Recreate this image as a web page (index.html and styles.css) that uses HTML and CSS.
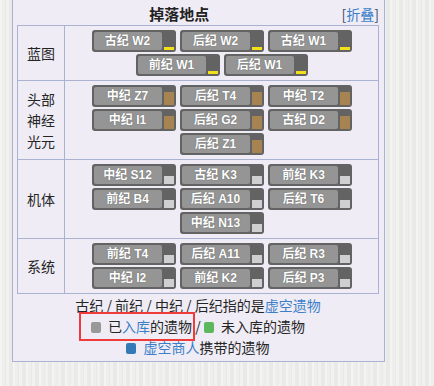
FILE: index.html
```html
<!DOCTYPE html>
<html lang="zh">
<head>
<meta charset="utf-8">
<title>掉落地点</title>
<link rel="stylesheet" href="styles.css">
</head>
<body>
<div class="navbox">
  <div class="navbox-title">
    <span class="toggle">[<a class="link">折叠</a>]</span>
    <span class="title-text">掉落地点</span>
  </div>
  <div class="navbox-grid">
    <div class="group">蓝图</div>
    <div class="items">
      <a class="relic"><span class="relic-name">古纪 W2</span><span class="meter"><span class="fill bp"></span></span></a>
      <a class="relic"><span class="relic-name">后纪 W2</span><span class="meter"><span class="fill bp"></span></span></a>
      <a class="relic"><span class="relic-name">古纪 W1</span><span class="meter"><span class="fill bp"></span></span></a>
      <a class="relic"><span class="relic-name">前纪 W1</span><span class="meter"><span class="fill bp"></span></span></a>
      <a class="relic"><span class="relic-name">后纪 W1</span><span class="meter"><span class="fill bp"></span></span></a>
    </div>

    <div class="group">头部<br>神经<br>光元</div>
    <div class="items">
      <a class="relic"><span class="relic-name">中纪 Z7</span><span class="meter"><span class="fill neuro"></span></span></a>
      <a class="relic"><span class="relic-name">后纪 T4</span><span class="meter"><span class="fill neuro"></span></span></a>
      <a class="relic"><span class="relic-name">中纪 T2</span><span class="meter"><span class="fill neuro"></span></span></a>
      <a class="relic"><span class="relic-name">中纪 I1</span><span class="meter"><span class="fill neuro"></span></span></a>
      <a class="relic"><span class="relic-name">后纪 G2</span><span class="meter"><span class="fill neuro"></span></span></a>
      <a class="relic"><span class="relic-name">古纪 D2</span><span class="meter"><span class="fill neuro"></span></span></a>
      <a class="relic"><span class="relic-name">后纪 Z1</span><span class="meter"><span class="fill neuro"></span></span></a>
    </div>

    <div class="group">机体</div>
    <div class="items">
      <a class="relic"><span class="relic-name">中纪 S12</span><span class="meter"><span class="fill part"></span></span></a>
      <a class="relic"><span class="relic-name">古纪 K3</span><span class="meter"><span class="fill part"></span></span></a>
      <a class="relic"><span class="relic-name">前纪 K3</span><span class="meter"><span class="fill part"></span></span></a>
      <a class="relic"><span class="relic-name">前纪 B4</span><span class="meter"><span class="fill part"></span></span></a>
      <a class="relic"><span class="relic-name">后纪 A10</span><span class="meter"><span class="fill part"></span></span></a>
      <a class="relic"><span class="relic-name">后纪 T6</span><span class="meter"><span class="fill part"></span></span></a>
      <a class="relic"><span class="relic-name">中纪 N13</span><span class="meter"><span class="fill part"></span></span></a>
    </div>

    <div class="group">系统</div>
    <div class="items">
      <a class="relic"><span class="relic-name">前纪 T4</span><span class="meter"><span class="fill part"></span></span></a>
      <a class="relic"><span class="relic-name">后纪 A11</span><span class="meter"><span class="fill part"></span></span></a>
      <a class="relic"><span class="relic-name">后纪 R3</span><span class="meter"><span class="fill part"></span></span></a>
      <a class="relic"><span class="relic-name">中纪 I2</span><span class="meter"><span class="fill part"></span></span></a>
      <a class="relic"><span class="relic-name">前纪 K2</span><span class="meter"><span class="fill part"></span></span></a>
      <a class="relic"><span class="relic-name">后纪 P3</span><span class="meter"><span class="fill part"></span></span></a>
    </div>
  </div>
  <div class="navbox-footer">
    <div>古纪 / 前纪 / 中纪 / 后纪指的是<a class="link">虚空遗物</a></div>
    <div><span class="highlight"><span class="swatch gray"></span> 已<a class="link">入库</a>的遗物</span> / <span class="swatch green"></span> 未入库的遗物</div>
    <div><span class="swatch blue"></span> <a class="link">虚空商人</a>携带的遗物</div>
  </div>
</div>
</body>
</html>
```

FILE: styles.css
```css
html, body {
  margin: 0;
  padding: 0;
}

body {
  width: 434px;
  height: 386px;
  overflow: hidden;
  font-family: "Noto Sans CJK SC", "Liberation Sans", sans-serif;
  font-size: 14px;
  color: #252525;
  background-color: #eeeeec;
  background-image:
    repeating-linear-gradient(90deg,
      rgba(255,255,255,0.35) 0px, rgba(255,255,255,0.35) 2px,
      rgba(0,0,0,0.00) 2px, rgba(0,0,0,0.00) 5px,
      rgba(0,0,0,0.025) 5px, rgba(0,0,0,0.025) 6px,
      rgba(255,255,255,0.2) 6px, rgba(255,255,255,0.2) 9px,
      rgba(0,0,0,0.02) 9px, rgba(0,0,0,0.02) 13px);
}

.navbox {
  width: 362px;
  margin: -3px 0 0 12px;
  padding: 5px 5px 3px 4px;
  border: 1px solid #a9b3d1;
  background: #efecf5;
}

.navbox-title {
  height: 22px;
  line-height: 22px;
  text-align: center;
}

.title-text {
  font-weight: bold;
  font-size: 15px;
  color: #222;
}

.toggle {
  float: right;
  font-size: 14px;
  color: #3a4a66;
  font-weight: normal;
}

.link {
  color: #3c7fc8;
  text-decoration: none;
}

.navbox-grid {
  display: grid;
  grid-template-columns: 47px 1fr;
  border: 1px solid #a9b3d1;
  border-bottom: none;
}

.group {
  display: flex;
  align-items: center;
  justify-content: center;
  text-align: center;
  line-height: 21px;
  border-right: 1px solid #a9b3d1;
  border-bottom: 1px solid #a9b3d1;
  color: #252525;
}

.items {
  display: flex;
  flex-wrap: wrap;
  justify-content: center;
  align-content: flex-start;
  gap: 2px 4px;
  padding: 4px 0;
  border-bottom: 1px solid #a9b3d1;
}

.relic {
  display: flex;
  box-sizing: border-box;
  width: 84px;
  height: 22px;
  padding: 2px;
  background: #636363;
  border-radius: 3px;
}

.relic-name {
  width: 68px;
  height: 18px;
  background: #959595;
  border-radius: 2px;
  color: #fff;
  font-family: "Liberation Sans", "Noto Sans CJK SC", sans-serif;
  font-weight: bold;
  font-size: 12px;
  line-height: 18px;
  text-align: center;
  white-space: nowrap;
  text-shadow: 0 0 1px #555;
}

.meter {
  width: 12px;
  display: flex;
  align-items: flex-end;
  justify-content: flex-end;
}

.fill {
  width: 10px;
}

.fill.bp {
  height: 3px;
  background: #f3e01a;
}

.fill.neuro {
  height: 13px;
  background: #a78352;
}

.fill.part {
  height: 8px;
  background: #cfcfd1;
}

.navbox-footer {
  text-align: center;
  line-height: 21px;
  padding-top: 1px;
  color: #252525;
}

.swatch {
  display: inline-block;
  width: 10px;
  height: 11px;
  margin-right: 4px;
  border-radius: 2px;
  vertical-align: -1px;
}

.swatch.gray { background: #999999; }
.swatch.green { background: #5cb85c; }
.swatch.blue { background: #337ab7; }

.highlight {
  position: relative;
}

.highlight::after {
  content: "";
  position: absolute;
  left: -12px;
  right: -3px;
  top: -4px;
  bottom: -5px;
  border: 2px solid #f03b3b;
  pointer-events: none;
}
```
